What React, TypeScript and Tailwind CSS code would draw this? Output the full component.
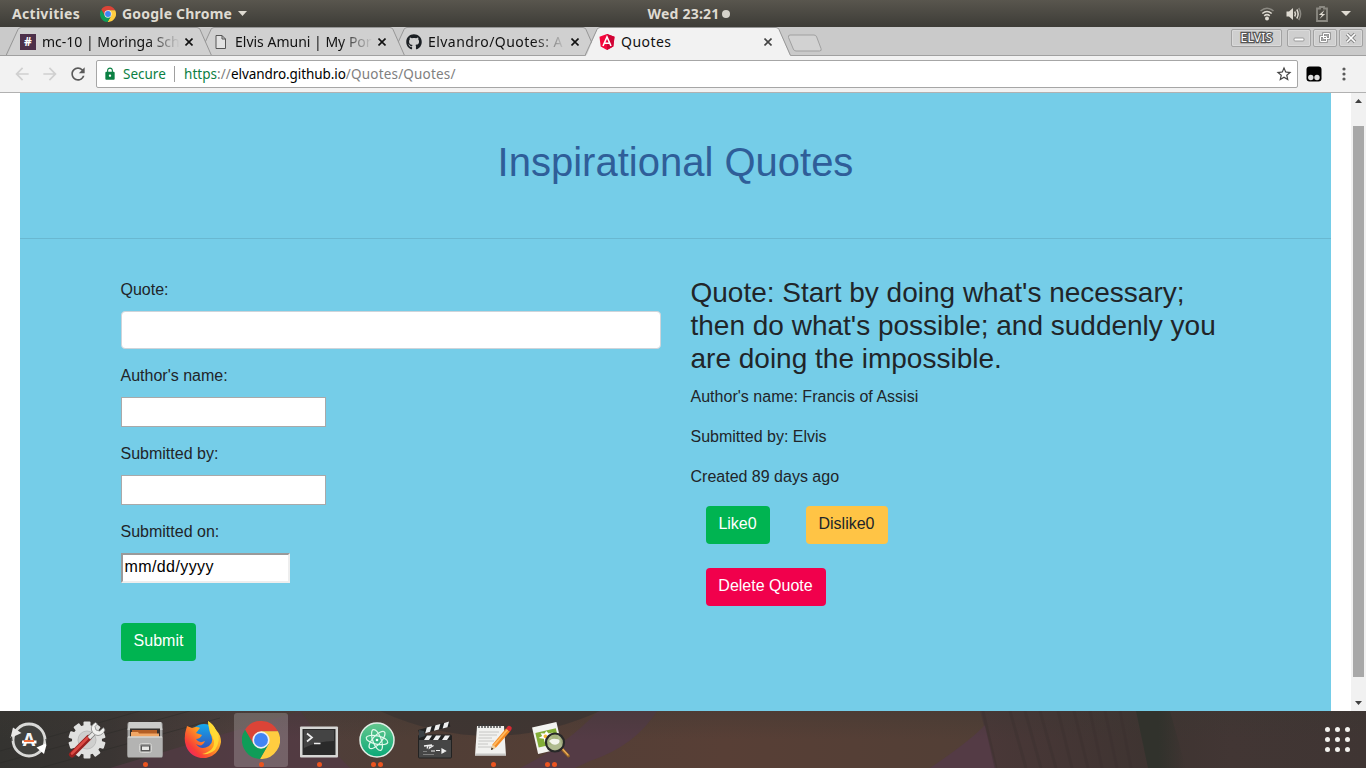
import type { ReactNode } from "react";
import { FaGithub } from "react-icons/fa";
import { MdArrowBack, MdArrowForward, MdLock, MdRefresh, MdStarBorder } from "react-icons/md";

function ChromeLogo({ className }: { className: string }) {
  return (
    <svg viewBox="-12 -12 24 24" className={className}>
      <path d="M-10.07 -6.54A12 12 0 0 1 10.7 -5.45L0 -5.45L0 0L-4.72 2.72Z" fill="#db4437" />
      <path d="M10.7 -5.45A12 12 0 0 1 -0.63 11.99L4.72 2.72L0 0L0 -5.45Z" fill="#ffcd40" />
      <path d="M-0.63 11.99A12 12 0 0 1 -10.07 -6.54L-4.72 2.72L0 0L4.72 2.72Z" fill="#0f9d58" />
      <circle r="5.45" fill="#f1f1f1" />
      <circle r="4.4" fill="#4285f4" />
    </svg>
  );
}

function TopBar() {
  return (
    <header className="grid h-[27px] shrink-0 grid-cols-[1fr_auto_1fr] items-center bg-gradient-to-b from-[#59564e] to-[#3d3c37] font-['Noto_Sans',sans-serif] text-[14px] leading-[27px] font-bold text-[#dfdbd2]">
      <div className="flex items-center pl-3">
        <span className="w-[88px] tracking-[0.3px]">Activities</span>
        <ChromeLogo className="mr-[6px] size-4" />
        <span className="tracking-[0.2px]">Google Chrome</span>
        <svg viewBox="0 0 9 5" className="ml-[6px] h-[5px] w-[9px]">
          <path d="M0 0H9L4.500 5Z" fill="#dfdbd2" />
        </svg>
      </div>
      <div className="flex items-center gap-[3px] pl-[12px]">
        <span className="tracking-[0.2px]">Wed 23:21</span>
        <span className="size-2 rounded-full bg-[#d5d2ca]" />
      </div>
      <div className="flex items-center justify-end pr-[15px]">
        <svg viewBox="0 0 14 14" className="mr-3 h-[14px] w-[14px]" fill="none" strokeWidth="1.600">
          <path d="M0.500 4Q7 -1.500 13.500 4" stroke="#8b8982" />
          <path d="M2.300 6.500Q7 2.500 11.700 6.500" stroke="#dfdbd2" />
          <path d="M4.200 8.800Q7 6.500 9.800 8.800" stroke="#dfdbd2" />
          <circle cx="7" cy="11.500" r="2" fill="#dfdbd2" />
        </svg>
        <svg viewBox="0 0 16 14" className="mr-[14px] h-[14px] w-4" fill="none" strokeWidth="1.500">
          <path d="M0.500 4.500H3L7 1V13L3 9.500H0.500Z" fill="#dfdbd2" />
          <path d="M8.700 4.500Q10.300 7 8.700 9.500M10.800 2.500Q13.500 7 10.800 11.500" stroke="#dfdbd2" />
          <path d="M12.700 1Q16.500 7 12.700 13" stroke="#8b8982" />
        </svg>
        <svg viewBox="0 0 12 16" className="mr-[13px] h-4 w-3" fill="none">
          <path d="M1 2.500H4V1H8V2.500H11V15H1Z" stroke="#8b8982" strokeWidth="1.800" />
          <path d="M8.500 4L2.800 9H6L3.500 13L9.200 8H6.200Z" fill="#dfdbd2" />
        </svg>
        <svg viewBox="0 0 10 5" className="h-[5px] w-[10px]">
          <path d="M0 0H10L5 5Z" fill="#dfdbd2" />
        </svg>
      </div>
    </header>
  );
}

type TabProps = { title: string; icon: ReactNode; layer: string; spacing?: string; active?: boolean; faded?: boolean };

function Tab({ title, icon, layer, spacing = "", active = false, faded = false }: TabProps) {
  return (
    <div className={`relative flex h-[29px] w-[193px] shrink-0 items-center pl-[14px] ${layer}`}>
      <svg viewBox="0 0 207 29" className="absolute top-0 left-0 h-[29px] w-[207px] max-w-none">
        <path d="M0 29L2 27.500L12 2.500Q13 0.500 15 0.500H191Q193 0.500 194 2.500L204.500 27.500L206 29Z" fill={active ? "#f2f2f2" : "#d0d0d0"} />
        <path d="M0 28.500L12 2.500Q13 0.500 15 0.500H191Q193 0.500 194 2.500L205.500 28.500" fill="none" stroke="#969696" />
        {!active && <path d="M0 28.500H206" stroke="#a0a0a0" />}
      </svg>
      <div className="relative flex size-4 shrink-0 items-center justify-center">{icon}</div>
      <div
        className={`relative ml-[6px] w-[142px] text-[14px] leading-5 whitespace-nowrap text-[#111] ${spacing} ${faded ? "[mask-image:linear-gradient(to_right,#000_74%,transparent_97%)]" : ""}`}
      >
        {title}
      </div>
      <svg viewBox="0 0 8 8" className="relative ml-px size-2 shrink-0" fill="none" stroke={active ? "#444" : "#111"} strokeWidth="1.600">
        <path d="M0.500 0.500L7.500 7.500M7.500 0.500L0.500 7.500" />
      </svg>
    </div>
  );
}

function WindowButton({ children, wide = false }: { children: ReactNode; wide?: boolean }) {
  return (
    <div className={`flex h-[18px] items-center justify-center rounded-[2px] border border-[#a2a2a2] bg-[#cfcfcf] shadow-[inset_0_0_0_1px_#dadada] ${wide ? "mr-[3px] w-[51px]" : "w-6"}`}>
      {children}
    </div>
  );
}

function TabStrip() {
  return (
    <div className="flex h-[29px] shrink-0 justify-between border-b border-[#a0a0a0] bg-[#cacaca] font-['Noto_Sans',sans-serif]">
      <div className="flex pl-[6px]">
        <Tab
          title="mc-10 | Moringa Sch"
          layer="z-30"
          faded
          icon={<span className="flex size-4 items-center justify-center bg-[#4d304a] text-[12px] leading-4 font-bold text-white">#</span>}
        />
        <Tab
          title="Elvis Amuni | My Por"
          layer="z-20"
          faded
          icon={
            <svg viewBox="0 0 12 14" className="h-[14px] w-3" fill="#e2e2e2" stroke="#555">
              <path d="M1 0.500H7L10.500 4V13.500H1ZM7 0.500V4H10.500" />
            </svg>
          }
        />
        <Tab title="Elvandro/Quotes: A" layer="z-10" spacing="tracking-[0.45px]" faded icon={<FaGithub className="size-4 text-[#1b1f23]" />} />
        <Tab
          title="Quotes"
          layer="z-40"
          spacing="tracking-[0.45px]"
          active
          icon={
            <svg viewBox="0 0 16 16" className="size-4">
              <path d="M8 0L15.500 2.700L14.300 12.500L8 16L1.700 12.500L0.500 2.700Z" fill="#f5063c" />
              <path d="M8 0L15.500 2.700L14.300 12.500L8 16Z" fill="#cf0335" />
              <path d="M4 12L8 3L12 12M5.700 9.300H10.300" fill="none" stroke="#fff" strokeWidth="1.600" />
            </svg>
          }
        />
        <svg viewBox="0 0 36 18" className="mt-[7px] ml-[9px] h-[18px] w-9" fill="#d2d2d2" stroke="#a0a0a0">
          <path d="M3 1H27Q29 1 29.700 3L34 14.500Q35 17 32.500 17H9Q7 17 6.300 15L1.500 3.500Q1 1 3 1Z" />
        </svg>
      </div>
      <div className="flex gap-[2px] pt-[2px] pr-[3px]">
        <WindowButton wide>
          <span className="text-[12px] leading-4 tracking-[0.3px] text-white [-webkit-text-stroke:2.5px_#555] [paint-order:stroke_fill]">ELVIS</span>
        </WindowButton>
        <WindowButton>
          <svg viewBox="0 0 12 12" className="size-3">
            <rect x="1" y="6" width="10" height="3" rx="1" fill="#fff" stroke="#999" />
          </svg>
        </WindowButton>
        <WindowButton>
          <svg viewBox="0 0 12 12" className="size-3" fill="none">
            <path d="M4.500 1.500H10.500V6.500H4.500ZM1.500 4.500H7.500V9.500H1.500Z" stroke="#8d8d8d" strokeWidth="2.600" />
            <path d="M4.500 1.500H10.500V6.500H4.500ZM1.500 4.500H7.500V9.500H1.500Z" stroke="#fff" />
          </svg>
        </WindowButton>
        <WindowButton>
          <svg viewBox="0 0 12 12" className="size-3" fill="none">
            <path d="M2 2L10 10M10 2L2 10" stroke="#858585" strokeWidth="3.500" />
            <path d="M2 2L10 10M10 2L2 10" stroke="#fff" strokeWidth="1.700" />
          </svg>
        </WindowButton>
      </div>
    </div>
  );
}

function Toolbar() {
  return (
    <div className="flex h-[37px] shrink-0 items-center border-b border-[#b1b1b1] bg-[#f2f2f2] pl-3 font-['Noto_Sans',sans-serif] text-[14px]">
      <MdArrowBack className="size-5 text-[#d0d0d0]" />
      <MdArrowForward className="ml-2 size-5 text-[#d0d0d0]" />
      <MdRefresh className="ml-2 size-5 text-[#5a5a5a]" />
      <div className="ml-2 flex h-7 w-[1202px] items-center rounded-[2px] border border-[#a6a6a6] bg-white">
        <MdLock className="ml-[6px] size-[14px] text-[#0b8043]" />
        <span className="ml-[6px] w-[51px] text-[13.500px] whitespace-nowrap text-[#0b8043]">Secure</span>
        <span className="h-4 w-px bg-[#a0a0a0]" />
        <span className="ml-[9px] flex-1 text-[13.500px] tracking-[0.18px] whitespace-nowrap text-[#808080]">
          <span className="tracking-[0.05px] text-[#0b8043]">https</span>
          <span className="tracking-[0.05px]">://</span>
          <span className="tracking-[-0.07px] text-black">elvandro.github.io</span>/Quotes/Quotes/
        </span>
        <MdStarBorder className="mr-[4px] size-[18px] text-[#444]" />
      </div>
      <svg viewBox="0 0 16 16" className="ml-2 size-4">
        <rect x="0.500" y="0.500" width="15" height="15" rx="3" fill="#000" />
        <circle cx="4.800" cy="11.500" r="2.700" fill="#ddd" />
        <circle cx="11" cy="11.500" r="2.700" fill="#ddd" />
      </svg>
      <svg viewBox="0 0 4 14" className="ml-5 h-[14px] w-1" fill="#5a5a5a">
        <circle cx="2" cy="2" r="1.600" />
        <circle cx="2" cy="7" r="1.600" />
        <circle cx="2" cy="12" r="1.600" />
      </svg>
    </div>
  );
}

function QuoteForm() {
  return (
    <form className="w-[570px] px-[15px] pt-[39px]">
      <label className="block">Quote:</label>
      <input className="mt-[9px] block h-[38px] w-full rounded-[4px] border border-[#ced4da] bg-white" />
      <label className="mt-[15px] block">Author's name:</label>
      <input className="mt-[9px] block h-[30px] w-[205px] border border-[#a9a9a9] bg-white" />
      <label className="mt-[15px] block">Submitted by:</label>
      <input className="mt-[9px] block h-[30px] w-[205px] border border-[#a9a9a9] bg-white" />
      <label className="mt-[15px] block">Submitted on:</label>
      <div className="mt-[9px] h-[30px] w-[169px] border-2 border-t-[#9a9a9a] border-r-[#eee] border-b-[#eee] border-l-[#9a9a9a] bg-white pl-[2px] leading-[24px] tracking-[0.400px] text-black">mm/dd/yyyy</div>
      <button type="button" className="mt-10 block h-[38px] w-[75px] rounded-[4px] bg-[#00b451] pb-[2px] pl-px text-white">Submit</button>
    </form>
  );
}

function QuoteDetails() {
  return (
    <section className="w-[570px] px-[15px] pt-[37px]">
      <h3 className="text-[28px] leading-[33px]">Quote: Start by doing what's necessary; then do what's possible; and suddenly you are doing the impossible.</h3>
      <p className="mt-[10px] tracking-[0.02px]">Author's name: Francis of Assisi</p>
      <p className="mt-4">Submitted by: Elvis</p>
      <p className="mt-4">Created 89 days ago</p>
      <div className="mt-[17px] flex gap-9 pl-[15px]">
        <button className="h-[38px] w-[64px] rounded-[4px] bg-[#00b451] pb-[2px] text-white">Like0</button>
        <button className="h-[38px] w-[82px] rounded-[4px] bg-[#ffc445] pb-[2px] text-[#212529]">Dislike0</button>
      </div>
      <button className="mt-6 ml-[15px] h-[38px] w-[120px] rounded-[4px] bg-[#f1004c] pb-[2px] text-white">Delete Quote</button>
    </section>
  );
}

function Page() {
  return (
    <div className="flex min-h-0 flex-1 bg-white pl-5 font-['Liberation_Sans',Arial,sans-serif] text-[16px] leading-6 text-[#212529]">
      <main className="w-[1311px] bg-[#75cde8]">
        <div className="h-[146px] border-b border-[#69b8d1] pt-[45px] text-center">
          <h1 className="text-[40px] leading-[48px] text-[#2f5e99]">Inspirational Quotes</h1>
        </div>
        <div className="mx-auto flex w-[1140px]">
          <QuoteForm />
          <QuoteDetails />
        </div>
      </main>
      <div className="ml-5 flex w-[15px] flex-col items-center justify-between bg-[#f1f1f1] pt-[6px] pb-[6px]">
        <svg viewBox="0 0 7 4" className="h-1 w-[7px]"><path d="M0 4L3.500 0L7 4Z" fill="#404040" /></svg>
        <div className="mt-[23px] mb-[24px] w-[11px] flex-1 bg-[#a8a8a8]" />
        <svg viewBox="0 0 7 4" className="h-1 w-[7px]"><path d="M0 0H7L3.500 4Z" fill="#404040" /></svg>
      </div>
    </div>
  );
}

const icon = "h-[38px] w-[38px]";

const UpdaterIcon = (
  <svg viewBox="0 0 38 38" className={icon}>
    <circle cx="19" cy="19" r="16" fill="#41413e" stroke="#d9d9d7" strokeWidth="2.800" />
    <path d="M0.500 17L3 6.500L11.500 12Z" fill="#e8e8e6" />
    <path d="M37 22L26.500 26.500L34 33Z" fill="#fff" />
    <path d="M2 20L1.500 15.500M36 18L37 24" stroke="#3a3a37" strokeWidth="1.200" />
    <text x="19" y="25" textAnchor="middle" fontSize="18" fontWeight="700" fontFamily="Noto Sans" fill="#f4f4f4">A</text>
    <path d="M12 21H26.500" stroke="#fff" strokeWidth="3" />
    <path d="M14 20H24" stroke="#ee6129" strokeWidth="1.800" />
  </svg>
);

const teeth = [0, 36, 72, 108, 144, 180, 216, 252, 288, 324];

const SettingsIcon = (
  <svg viewBox="0 0 38 38" className={icon}>
    <g fill="#e0e0df">
      {teeth.map((a) => (
        <rect key={a} x="15.500" y="0.500" width="7" height="8" rx="1" transform={`rotate(${a} 19 19)`} />
      ))}
      <circle cx="19" cy="19" r="15" />
    </g>
    <circle cx="19" cy="19" r="9" fill="#cfcfce" stroke="#bcbcbb" />
    <path d="M4 33.500L20.500 17" stroke="#98201f" strokeWidth="6" strokeLinecap="round" />
    <path d="M4 32.500L19.500 17" stroke="#dc4a44" strokeWidth="2.500" strokeLinecap="round" />
    <path d="M21 17L27 11" stroke="#777" strokeWidth="4.600" />
    <path d="M21 17L27 11" stroke="#e6e6e4" strokeWidth="3.200" />
    <path d="M27.500 1.500Q22.500 4 23.500 9Q25 14 30 14.500Q35 14 37 9L35.500 6.500L31.500 10L28 9L27 5.500L29.500 3Z" fill="#f1f1ef" stroke="#777" strokeWidth="0.700" />
  </svg>
);

const FilesIcon = (
  <svg viewBox="0 0 38 38" className={icon}>
    <rect x="1.500" y="1" width="35" height="35" rx="2" fill="#a6a6a5" />
    <path d="M3 1H35L36.500 9H1.500Z" fill="#cbcbc9" />
    <rect x="4" y="7.500" width="30" height="9" fill="#35302d" />
    <path d="M6 9H31V16H6Z" fill="#b45f26" />
    <path d="M5 11H12L13 12.500H33V17H5Z" fill="#f1a766" />
    <rect x="1.500" y="15.500" width="35" height="21" rx="1" fill="#b3b3b2" />
    <path d="M2 16H36" stroke="#e5e5e3" />
    <rect x="13.500" y="22.500" width="12" height="9" rx="2" fill="#9b9b9a" stroke="#d5d5d3" />
    <rect x="15.500" y="25" width="8" height="4.500" fill="#e8e8e6" stroke="#555" />
  </svg>
);

const FirefoxIcon = (
  <svg viewBox="0 0 38 38" className={icon}>
    <defs>
      <linearGradient id="fox" x1="1" y1="0" x2="0" y2="1">
        <stop offset="0" stopColor="#fff044" />
        <stop offset="0.450" stopColor="#ff9821" />
        <stop offset="0.750" stopColor="#f83e37" />
        <stop offset="1" stopColor="#e31587" />
      </linearGradient>
      <linearGradient id="globe" x1="0" y1="0" x2="0" y2="1">
        <stop offset="0" stopColor="#14a9ed" />
        <stop offset="1" stopColor="#3547b4" />
      </linearGradient>
    </defs>
    <circle cx="20" cy="17" r="14" fill="url(#globe)" />
    <path d="M3 5L8 7Q13 5 16 7L12 12L18 14Q16 18 12 18Q15 23 21 20Q18 27 12 23Q17 30 25 25Q31 20 26 12Q25 5 24 0Q29 3 32 9Q37 14 37 21Q35 34 22 37Q7 38 2 25Q-1 17 3 5Z" fill="url(#fox)" />
    <path d="M24 0Q29 3 32 9Q38 18 31 29Q25 34 18 33Q31 30 30 20Q28 14 26 11Q24 5 24 0Z" fill="#ffde35" opacity="0.850" />
  </svg>
);

const TerminalIcon = (
  <svg viewBox="0 0 38 38" className="h-[38px] w-[38px] overflow-visible">
    <rect x="0" y="5.500" width="38" height="31" rx="1" fill="#d6d6d4" />
    <rect x="2.500" y="8" width="33" height="26" fill="#2a2a2a" />
    <path d="M4 9H34V20Q18 20 4 27Z" fill="#444" />
    <path d="M7 12.500L12 16.500L7 20.500M14 22.500H20.500" fill="none" stroke="#eee" strokeWidth="1.700" />
  </svg>
);

const AtomIcon = (
  <svg viewBox="0 0 38 38" className={icon}>
    <defs>
      <linearGradient id="atom" x1="0" y1="0" x2="0" y2="1">
        <stop offset="0" stopColor="#65c88e" />
        <stop offset="1" stopColor="#0ba878" />
      </linearGradient>
    </defs>
    <circle cx="19" cy="19" r="17" fill="url(#atom)" stroke="#e1eee6" strokeWidth="1.500" />
    <g fill="none" stroke="#dff8ea" strokeWidth="1.200">
      <ellipse cx="19" cy="19" rx="4.200" ry="11" transform="rotate(-20 19 19)" />
      <ellipse cx="19" cy="19" rx="4.200" ry="11" transform="rotate(42 19 19)" />
      <ellipse cx="19" cy="19" rx="4.200" ry="11" transform="rotate(-78 19 19)" />
    </g>
    <circle cx="19" cy="19" r="1.300" fill="#fff" />
  </svg>
);

const ClapperIcon = (
  <svg viewBox="0 0 38 38" className={icon}>
    <g transform="rotate(-15 4 12)">
      <path d="M3 8.500H35V13.500H3Z" fill="#222" />
      <path d="M12 8.500H17L14 13.500H9ZM21 8.500H26L23 13.500H18ZM30 8.500H35L32 13.500H27Z" fill="#eee" />
    </g>
    <rect x="2.500" y="14" width="33" height="23" rx="1" fill="#464646" stroke="#222" />
    <path d="M3 14.500H35V19H3Z" fill="#222" />
    <path d="M11 14.500H16L13 19H8ZM20 14.500H25L22 19H17ZM29 14.500H34L31 19H26Z" fill="#eee" />
    <path d="M3 9L8 10L9 15L3 17Z" fill="#3b4145" />
    <path d="M8 25L16 24M12 25L11 27.500M14 25L13.500 27L17.500 24.500" fill="none" stroke="#f0f0f0" strokeWidth="1.300" />
    <path d="M15 30H19M20 29.500H24M26 28L29.500 30L26 32Z" fill="#f0f0f0" stroke="#f0f0f0" strokeWidth="1.200" />
    <path d="M7 33.500H18M7 30.500H11" stroke="#999" strokeWidth="0.700" />
  </svg>
);

const EditorIcon = (
  <svg viewBox="0 0 38 38" className={icon}>
    <path d="M3 5H30L32 34.500H1Z" fill="#f1f1ef" />
    <path d="M1 32.500H32V34.500H1Z" fill="#c7c7c5" />
    <path d="M5 3V7M8 3V7M11 3V7M14 3V7M17 3V7M20 3V7M23 3V7M26 3V7" stroke="#3b3b3b" strokeWidth="1.300" />
    <path d="M5 11H25M5 14H23M4.500 17H18M4.500 20H20M4 23H14M4 26H19" stroke="#bcbcba" strokeWidth="0.800" />
    <path d="M17 29L18.500 23.500L32 7.500L36 10.500L22 26.500Z" fill="#f48a22" />
    <path d="M19 24L33 8L34.300 9L20.500 25Z" fill="#ffba60" />
    <path d="M17 29L18.500 23.500L22 26.500Z" fill="#ecd1a4" />
    <path d="M32 7.500L34 5Q36 4 37.700 6.500Q38 8.500 36 10.500Z" fill="#d82b34" />
    <path d="M17 29L17.600 26.500L19.500 28Z" fill="#222" />
  </svg>
);

const ViewerIcon = (
  <svg viewBox="0 0 38 38" className="h-[38px] w-[38px] overflow-visible">
    <g transform="rotate(-13 15 18)">
      <rect x="3" y="3.500" width="25" height="27" fill="#f3f3f0" />
      <rect x="5" y="9.500" width="21" height="15" fill="#83ae37" />
      <path d="M7 15L11 14L10 11L14 12L16 10L18 13L22 13L19 16L21 19L16 18L12 21L12 17Z" fill="#fff" />
      <circle cx="14" cy="15" r="1.800" fill="#f5b637" />
    </g>
    <circle cx="23" cy="21.500" r="9" fill="#a9b585" fillOpacity="0.900" />
    <path d="M17 20Q20 17 24 18Q29 18 27 22Q24 25 20 23Z" fill="#f4f5ee" />
    <path d="M30 28L36.500 35" stroke="#936328" strokeWidth="3" strokeLinecap="round" />
    <path d="M30.500 28L36 34" stroke="#efad55" strokeWidth="1.300" strokeLinecap="round" />
    <circle cx="23" cy="21.500" r="9" fill="none" stroke="#282828" strokeWidth="2.200" />
  </svg>
);

const launchers: { art: ReactNode; windows: number; focused?: boolean }[] = [
  { art: UpdaterIcon, windows: 0 },
  { art: SettingsIcon, windows: 0 },
  { art: FilesIcon, windows: 1 },
  { art: FirefoxIcon, windows: 0 },
  { art: <ChromeLogo className="h-[38px] w-[38px]" />, windows: 1, focused: true },
  { art: TerminalIcon, windows: 1 },
  { art: AtomIcon, windows: 2 },
  { art: ClapperIcon, windows: 0 },
  { art: EditorIcon, windows: 1 },
  { art: ViewerIcon, windows: 2 },
];

function Wallpaper() {
  return (
    <svg viewBox="0 0 1366 57" preserveAspectRatio="none" className="absolute inset-0 h-full w-full">
      <defs>
        <linearGradient id="wall">
          <stop offset="0" stopColor="#343330" />
          <stop offset="0.080" stopColor="#3a3533" />
          <stop offset="0.180" stopColor="#4f3f3d" />
          <stop offset="0.300" stopColor="#503e36" />
          <stop offset="0.530" stopColor="#583f36" />
          <stop offset="0.720" stopColor="#523f36" />
          <stop offset="1" stopColor="#523f36" />
        </linearGradient>
        <linearGradient id="curtain">
          <stop offset="0" stopColor="#4a3838" />
          <stop offset="0.450" stopColor="#3e3431" />
          <stop offset="0.650" stopColor="#423634" />
          <stop offset="1" stopColor="#3f3533" />
        </linearGradient>
        <linearGradient id="shade" x1="0" y1="0" x2="0" y2="1">
          <stop offset="0" stopColor="#3b3732" stopOpacity="0.350" />
          <stop offset="0.500" stopColor="#3b3732" stopOpacity="0" />
        </linearGradient>
        <linearGradient id="fold">
          <stop offset="0" stopColor="#31322c" />
          <stop offset="0.450" stopColor="#31322c" />
          <stop offset="1" stopColor="#31322c" stopOpacity="0" />
        </linearGradient>
      </defs>
      <rect width="1366" height="57" fill="url(#wall)" />
      <path d="M110 57Q200 30 300 0Q320 27 350 57Z" fill="#543b46" opacity="0.700" />
      <path d="M520 57Q565 35 598 0H657Q635 35 590 50L575 57Z" fill="#543b45" />
      <path d="M980 0H1366V57H995Z" fill="url(#curtain)" />
      <path d="M930 57Q970 30 985 14L996 57Z" fill="#543b45" />
      <path d="M380 0Q490 50 600 0Z" fill="#393331" opacity="0.750" />
      <rect width="1366" height="57" fill="url(#shade)" />
      <g stroke="#3b302f" strokeWidth="3" opacity="0.400">
        <path d="M983 0L996 57M1010 0L1026 57M1025 0L1041 57M1040 0L1056 57M1058 0L1072 57M1074 0L1088 57M1090 0L1102 57M1105 0L1117 57M1120 0L1131 57" />
      </g>
      <path d="M1136 0H1170L1186 57H1148Z" fill="url(#fold)" />
      <path d="M0 40L140 0M0 52L190 0M40 57L220 7" stroke="#2b2b28" opacity="0.500" />
    </svg>
  );
}

function Dock() {
  return (
    <footer className="relative flex h-[57px] shrink-0 items-center justify-between overflow-hidden">
      <Wallpaper />
      <div className="relative flex gap-1 pl-[2px]">
        {launchers.map((item, i) => (
          <div key={i} className={`flex h-[54px] w-[54px] flex-col items-center rounded-[3px] pt-2 ${item.focused ? "bg-white/20" : ""}`}>
            {item.art}
            <div className="mt-[3px] flex gap-[2px]">
              {Array.from({ length: item.windows }, (_, n) => (
                <span key={n} className="size-[5px] rounded-full bg-[#ea5420]" />
              ))}
            </div>
          </div>
        ))}
      </div>
      <div className="relative mr-4 grid grid-cols-3 gap-x-[5px] gap-y-[5px]">
        {Array.from({ length: 9 }, (_, n) => (
          <span key={n} className="size-[5px] rounded-full bg-[#f3f2ee]" />
        ))}
      </div>
    </footer>
  );
}

export default function App() {
  return (
    <div className="flex h-[768px] w-[1366px] flex-col overflow-hidden">
      <TopBar />
      <TabStrip />
      <Toolbar />
      <Page />
      <Dock />
    </div>
  );
}
